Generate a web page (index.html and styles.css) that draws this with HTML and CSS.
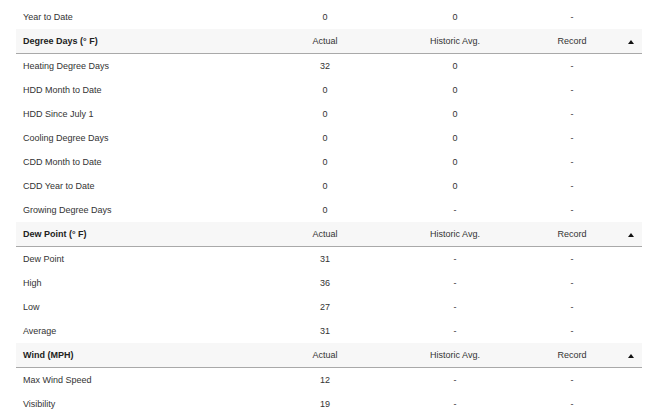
FILE: index.html
```
<!DOCTYPE html>
<html>
<head>
<meta charset="utf-8">
<link rel="stylesheet" href="styles.css">
</head>
<body>
<table class="stats">
  <colgroup>
    <col class="c-label"><col class="c-val"><col class="c-val"><col class="c-rec"><col class="c-tog">
  </colgroup>
  <tbody>
    <tr><td class="lbl">Year to Date</td><td>0</td><td>0</td><td>-</td><td></td></tr>
  </tbody>
  <tbody>
    <tr class="head"><th class="lbl">Degree Days (° F)</th><td>Actual</td><td>Historic Avg.</td><td>Record</td><td class="tog"><span class="caret"></span></td></tr>
    <tr><td class="lbl">Heating Degree Days</td><td>32</td><td>0</td><td>-</td><td></td></tr>
    <tr><td class="lbl">HDD Month to Date</td><td>0</td><td>0</td><td>-</td><td></td></tr>
    <tr><td class="lbl">HDD Since July 1</td><td>0</td><td>0</td><td>-</td><td></td></tr>
    <tr><td class="lbl">Cooling Degree Days</td><td>0</td><td>0</td><td>-</td><td></td></tr>
    <tr><td class="lbl">CDD Month to Date</td><td>0</td><td>0</td><td>-</td><td></td></tr>
    <tr><td class="lbl">CDD Year to Date</td><td>0</td><td>0</td><td>-</td><td></td></tr>
    <tr><td class="lbl">Growing Degree Days</td><td>0</td><td>-</td><td>-</td><td></td></tr>
  </tbody>
  <tbody>
    <tr class="head"><th class="lbl">Dew Point (° F)</th><td>Actual</td><td>Historic Avg.</td><td>Record</td><td class="tog"><span class="caret"></span></td></tr>
    <tr><td class="lbl">Dew Point</td><td>31</td><td>-</td><td>-</td><td></td></tr>
    <tr><td class="lbl">High</td><td>36</td><td>-</td><td>-</td><td></td></tr>
    <tr><td class="lbl">Low</td><td>27</td><td>-</td><td>-</td><td></td></tr>
    <tr><td class="lbl">Average</td><td>31</td><td>-</td><td>-</td><td></td></tr>
  </tbody>
  <tbody>
    <tr class="head"><th class="lbl">Wind (MPH)</th><td>Actual</td><td>Historic Avg.</td><td>Record</td><td class="tog"><span class="caret"></span></td></tr>
    <tr><td class="lbl">Max Wind Speed</td><td>12</td><td>-</td><td>-</td><td></td></tr>
    <tr><td class="lbl">Visibility</td><td>19</td><td>-</td><td>-</td><td></td></tr>
  </tbody>
</table>
</body>
</html>
```
FILE: styles.css
```
html, body {
  margin: 0;
  padding: 0;
  background: #fff;
}
body {
  padding: 5px 4px 0 16px;
  font-family: "Liberation Sans", Arial, sans-serif;
  font-size: 9px;
  color: #333;
}
.stats {
  width: 626px;
  border-collapse: collapse;
  table-layout: fixed;
}
.c-label { width: 244px; }
.c-val { width: 130px; }
.c-rec { width: 104px; }
.c-tog { width: 18px; }
.stats td, .stats th {
  height: 24px;
  padding: 0;
  text-align: center;
  vertical-align: middle;
  font-weight: normal;
  white-space: nowrap;
}
.stats .lbl {
  text-align: left;
  padding-left: 7px;
}
.stats .head td, .stats .head th {
  background: #f7f7f7;
  border-bottom: 1px solid #a9a9a9;
}
.stats .head th {
  font-weight: bold;
  color: #222;
}
.caret {
  display: inline-block;
  width: 0;
  height: 0;
  border-left: 3.5px solid transparent;
  border-right: 3.5px solid transparent;
  border-bottom: 4px solid #111;
  vertical-align: middle;
  margin-right: 4px;
}
```
